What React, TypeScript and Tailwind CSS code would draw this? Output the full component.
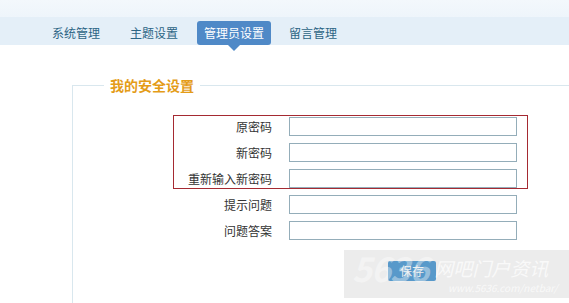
const tabs = [
  { name: "系统管理", ml: "ml-[45px]", active: false },
  { name: "主题设置", ml: "ml-[16px]", active: false },
  { name: "管理员设置", ml: "ml-[12px]", active: true },
  { name: "留言管理", ml: "ml-[11px]", active: false },
];

const pwdRows = ["原密码", "新密码", "重新输入新密码"];
const otherRows = ["提示问题", "问题答案"];

function Row({ label }: { label: string }) {
  return (
    <div className="flex items-center h-[19px]">
      <label className="w-[98px] text-right text-[12px] leading-[19px] text-[#333]">
        {label}
      </label>
      <input
        type="text"
        className="ml-[17px] w-[228px] h-[19px] border border-[#94adb9] bg-white outline-none"
      />
    </div>
  );
}

function App() {
  return (
    <div
      className="relative w-[569px] h-[303px] overflow-hidden bg-white"
      style={{ fontFamily: '"Noto Sans CJK SC", "Noto Sans", sans-serif' }}
    >
      {/* 顶部 */}
      <div className="h-[17px] bg-gradient-to-b from-[#f3f8fc] to-[#eef5fb]" />
      <div className="h-[28px] bg-[#e4eff8] flex items-end">
        {tabs.map((t) => (
          <div
            key={t.name}
            className={`${t.ml} relative h-[24px] px-[7px] rounded-[3px] text-[12px] leading-[24px] ${
              t.active ? "bg-[#4f89c7] text-white" : "text-[#2c6585]"
            }`}
          >
            {t.name}
            {t.active && (
              <span className="absolute left-1/2 -translate-x-1/2 top-[24px] w-0 h-0 border-l-[6px] border-r-[6px] border-t-[6px] border-l-transparent border-r-transparent border-t-[#4f89c7]" />
            )}
          </div>
        ))}
      </div>

      <fieldset className="ml-[72px] mt-[32px] w-[520px] h-[300px] border border-[#d9e7ee] p-0">
        <legend className="ml-[31px] px-[6px] text-[14px] font-bold text-[#e49c18] leading-[16px]">
          我的安全设置
        </legend>

        <div className="pl-[100px] pt-[22px]">
          <div className="flex flex-col gap-[6px]">
            <div className="w-[355px] border border-[#a52a32] pt-[1px] flex flex-col gap-[7px]">
              {pwdRows.map((r) => (
                <Row key={r} label={r} />
              ))}
            </div>
            <div className="flex flex-col gap-[7px] pl-[1px]">
              {otherRows.map((r) => (
                <Row key={r} label={r} />
              ))}
            </div>
          </div>

          <button className="ml-[215px] mt-[21px] w-[48px] h-[20px] rounded-[2px] bg-[#3a90d2] text-white text-[12px] leading-[20px]">
            保存
          </button>
        </div>
      </fieldset>

      {/* 水印 */}
      <div className="absolute left-[344px] top-[250px] w-[225px] h-[48px] bg-[#b4b4b4]/25">
        <div className="flex items-center h-[36px]">
          <span className="ml-[8px] text-[34px] font-bold italic text-white/40 leading-[36px] tracking-[-1px]">
            5636
          </span>
          <span className="ml-[6px] text-[19px] italic text-white/70 leading-[24px]">
            网吧门户资讯
          </span>
        </div>
        <div className="absolute left-[104px] top-[32px] text-[10px] italic text-white/70 leading-[12px]">
          www.5636.com/netbar/
        </div>
      </div>
    </div>
  );
}

export default App;
